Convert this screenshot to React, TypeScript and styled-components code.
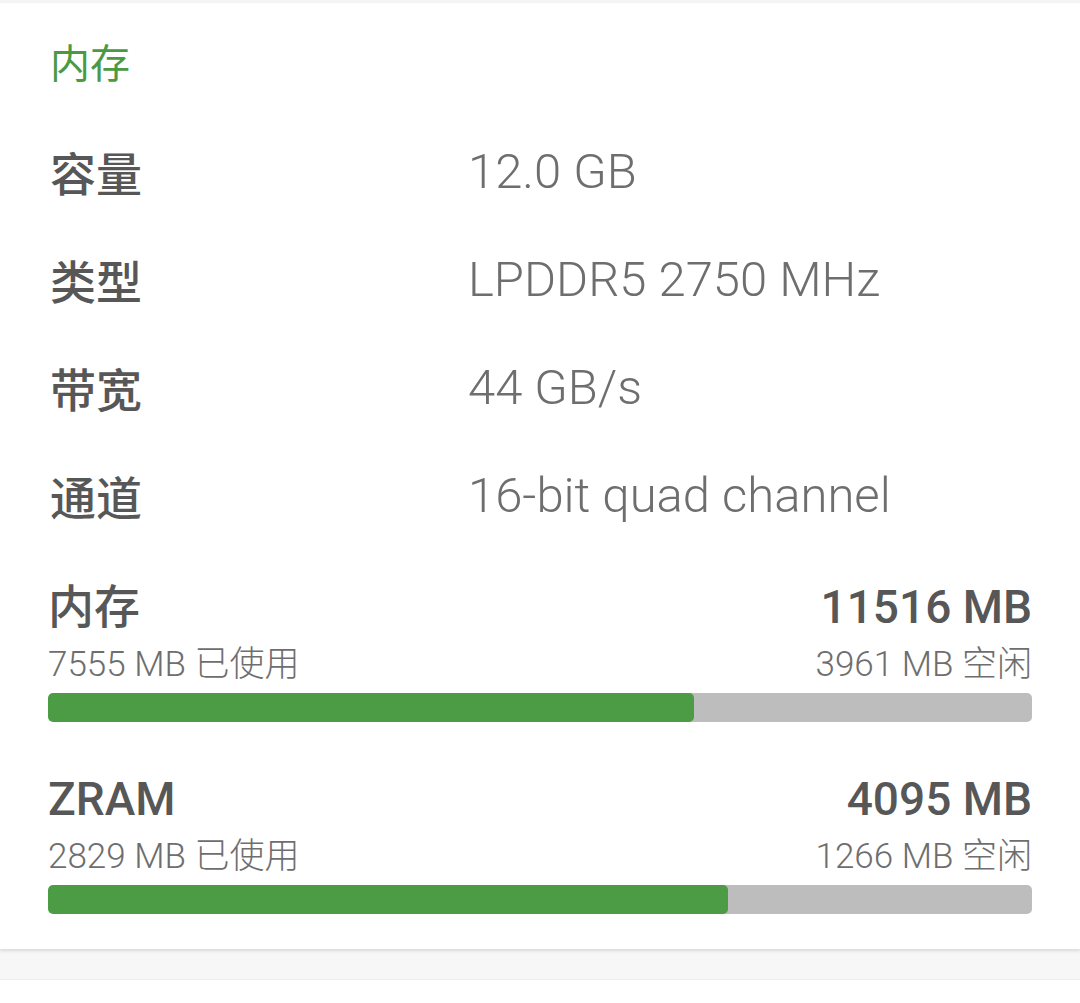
import styled, { createGlobalStyle } from "styled-components";

type SpecRow = {
  label: string;
  value: string;
};

type UsageBlock = {
  title: string;
  total: number;
  used: number;
};

const specs: SpecRow[] = [
  { label: "容量", value: "12.0 GB" },
  { label: "类型", value: "LPDDR5 2750 MHz" },
  { label: "带宽", value: "44 GB/s" },
  { label: "通道", value: "16-bit quad channel" },
];

const usage: UsageBlock[] = [
  { title: "内存", total: 11516, used: 7555 },
  { title: "ZRAM", total: 4095, used: 2829 },
];

const GlobalStyle = createGlobalStyle`
  html, body {
    margin: 0;
    padding: 0;
    background: #fff;
  }
  body {
    font-family: Roboto, "Noto Sans CJK SC", sans-serif;
    -webkit-font-smoothing: antialiased;
  }
`;

const App: React.FC = () => {
  return (
    <>
      <GlobalStyle />
      <Page>
        <Card>
          <Header>内存</Header>
          <SpecList>
            {specs.map((row) => (
              <Row key={row.label}>
                <Label>{row.label}</Label>
                <Value>{row.value}</Value>
              </Row>
            ))}
          </SpecList>
          <UsageList>
            {usage.map((block) => (
              <Usage key={block.title}>
                <UsageHead>
                  <UsageTitle>{block.title}</UsageTitle>
                  <UsageTitle>{block.total} MB</UsageTitle>
                </UsageHead>
                <UsageSub>
                  <span>{block.used} MB 已使用</span>
                  <span>{block.total - block.used} MB 空闲</span>
                </UsageSub>
                <Track>
                  <Fill style={{ width: `${(block.used / block.total) * 100}%` }} />
                </Track>
              </Usage>
            ))}
          </UsageList>
        </Card>
        <Gap />
      </Page>
    </>
  );
};
export default App;

const Page = styled.div`
  min-height: 1003px;
  padding-top: 3px;
  background: linear-gradient(#f4f4f4 0 3px, #fff 3px);
`;

const Card = styled.div`
  background: #fff;
  padding: 30px 48px 35px;
  box-shadow: 0 2px 3px rgba(0, 0, 0, 0.12);
  position: relative;
  z-index: 1;
`;

const Gap = styled.div`
  height: 30px;
  background: #f7f7f7;
  border-bottom: 1px solid #ededed;
`;

const Header = styled.div`
  color: #4a9a44;
  font-size: 40px;
  line-height: 64px;
  margin-left: 2px;
`;

const SpecList = styled.div`
  display: flex;
  flex-direction: column;
  margin-top: 20px;
`;

const Row = styled.div`
  display: grid;
  grid-template-columns: 420px 1fr;
  align-items: center;
  height: 108px;
`;

const Label = styled.div`
  color: #575757;
  font-size: 46px;
  font-weight: 500;
  margin-left: 2px;
`;

const Value = styled.div`
  color: #6e6e6e;
  font-size: 49px;
  font-weight: 300;
`;

const UsageList = styled.div`
  display: flex;
  flex-direction: column;
  gap: 49px;
  margin-top: 30px;
`;

const Usage = styled.div`
  display: flex;
  flex-direction: column;
`;

const UsageHead = styled.div`
  display: flex;
  justify-content: space-between;
  align-items: baseline;
`;

const UsageTitle = styled.div`
  color: #575757;
  font-size: 46px;
  font-weight: 500;
  line-height: 56px;
`;

const UsageSub = styled.div`
  display: flex;
  justify-content: space-between;
  margin-top: 5px;
  color: #6e6e6e;
  font-size: 35px;
  font-weight: 300;
  line-height: 50px;
`;

const Track = styled.div`
  height: 29px;
  margin-top: 3px;
  border-radius: 5px;
  background: #bdbdbd;
  overflow: hidden;
`;

const Fill = styled.div`
  height: 100%;
  border-radius: 5px;
  background: #4b9c45;
`;
